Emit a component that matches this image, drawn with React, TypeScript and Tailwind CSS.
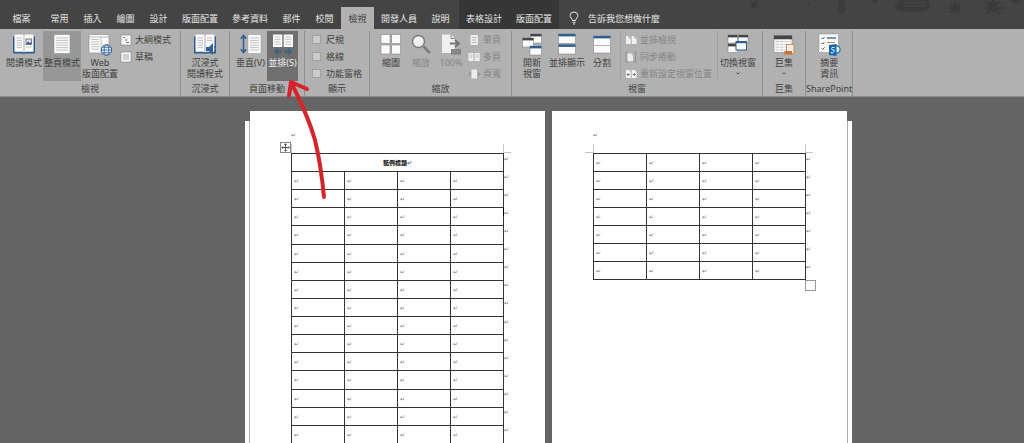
import type { ReactNode } from 'react';
import clsx from 'clsx';

const BLUE = '#2f5f92';
const INK = '#454545';

/* ---------- ribbon icons, all drawn on a 22x20 box ---------- */

function Icon({ children }: { children: ReactNode }) {
  return (
    <svg viewBox="0 0 22 20" className="h-5 w-[22px] shrink-0 overflow-visible" fill="none" aria-hidden="true">
      {children}
    </svg>
  );
}

function Lines({ x, y, w, n, gap = 2.4 }: { x: number; y: number; w: number; n: number; gap?: number }) {
  return (
    <>
      {Array.from({ length: n }, (_, i) => (
        <path key={i} d={`M${x} ${y + i * gap}h${w}`} stroke="#b4b4b4" strokeWidth="0.8" />
      ))}
    </>
  );
}

function Book({ children }: { children?: ReactNode }) {
  return (
    <Icon>
      <path d="M0 2.500h22v17H12.300l-1.300.8-1.300-.8H0z" fill={BLUE} />
      <path d="M1.500 .5h8Q11 .7 11 2v16.500q-.5-.8-2-.8H1.500z" fill="#fafafa" />
      <path d="M20.500 .5h-8Q11 .7 11 2v16.500q.5-.8 2-.8h7.500z" fill="#fafafa" />
      <path d="M11 1.500v17" stroke="#9a9a9a" strokeWidth=".8" />
      <Lines x={3.5} y={4} w={5.5} n={5} />
      {children}
    </Icon>
  );
}

const ReadIcon = () => (
  <Book>
    <rect x="13" y="5" width="5.500" height="5.500" fill="#dfe7ee" stroke={INK} strokeWidth=".7" />
    <path d="M13.200 10.300l2-3 1.500 1.700 1.500-1v2.300z" fill={BLUE} />
    <Lines x={13} y={13} w={5.5} n={1} />
  </Book>
);

const ImmersiveIcon = () => (
  <Book>
    <Lines x={13} y={4} w={5.5} n={2} />
    <path d="M12 13h3l4-4v12l-4-4h-3z" fill={BLUE} />
    <path d="M20.500 12q2 3 0 6" stroke={BLUE} strokeWidth="1.300" />
  </Book>
);

const PrintIcon = () => (
  <Icon>
    <rect x="3" y=".5" width="16" height="19" fill="#fafafa" stroke="#8a8a8a" strokeWidth=".5" />
    <Lines x={5} y={4} w={12} n={6} />
  </Icon>
);

const WebIcon = () => (
  <Icon>
    <path d="M0 .5h20v18.500H0z" fill="#fafafa" stroke="#8a8a8a" strokeWidth=".6" />
    <path d="M0 3h20M12 3v15" stroke="#a0a0a0" strokeWidth=".7" />
    <Lines x={2} y={5.5} w={8} n={5} />
    <circle cx="17.500" cy="16" r="5.200" fill="#e7edf3" stroke={BLUE} />
    <ellipse cx="17.500" cy="16" rx="2.300" ry="5.200" stroke={BLUE} strokeWidth=".8" />
    <path d="M12.300 16h10.400M13.200 13.300h8.600M13.200 18.700h8.600" stroke={BLUE} strokeWidth=".8" />
  </Icon>
);

const VerticalIcon = () => (
  <Icon>
    <path d="M3.500 2v16M.8 4.800L3.500 1.500l2.700 3.300M.8 15.200l2.700 3.300 2.700-3.300" stroke={BLUE} strokeWidth="1.500" />
    <rect x="8" y=".5" width="13" height="19" fill="#fafafa" stroke="#8a8a8a" strokeWidth=".4" />
    <Lines x={10} y={4} w={9} n={6} />
  </Icon>
);

const SideIcon = () => (
  <Icon>
    <rect x="1" y=".5" width="9.300" height="12.500" fill="#fafafa" />
    <rect x="11.700" y=".5" width="9.300" height="12.500" fill="#fafafa" />
    <Lines x={2.5} y={3} w={6} n={4} />
    <Lines x={13.2} y={3} w={6} n={4} />
    <path d="M9.500 17.500H3M6 14.800l-3 2.700 3 2.700M12.500 17.500H19M16 14.800l3 2.700-3 2.700" stroke="#3c5f86" strokeWidth="1.800" />
  </Icon>
);

const ThumbsIcon = () => (
  <Icon>
    {[[1, 0.5], [11.7, 0.5], [1, 11], [11.7, 11]].map(([x, y]) => (
      <rect key={`${x}-${y}`} x={x} y={y} width="9" height="9" fill="#fafafa" stroke="#858585" strokeWidth=".6" />
    ))}
  </Icon>
);

const ZoomIcon = () => (
  <Icon>
    <path d="M13.500 12.500l6.500 6.500" stroke="#7d7d7d" strokeWidth="2.600" />
    <circle cx="8.500" cy="7.500" r="6" fill="#efefef" stroke="#7d7d7d" strokeWidth="1.500" />
  </Icon>
);

const HundredIcon = () => (
  <Icon>
    <path d="M2 .5h9l4 4v14.500H2z" fill="#efefef" />
    <path d="M11 .5v4h4" stroke="#8b8b8b" />
    <path d="M10 9.500h8M15 6l4 3.500-4 3.500" stroke="#757575" strokeWidth="1.800" />
    <rect x="11.500" y="15.500" width="9" height="4.500" fill="#8a8a8a" stroke="#757575" strokeWidth=".8" />
  </Icon>
);

interface WinProps {
  x: number;
  y: number;
  w: number;
  h: number;
  color?: string;
  bar?: number;
}

function Win({ x, y, w, h, color = BLUE, bar = 2.4 }: WinProps) {
  return (
    <>
      <rect x={x} y={y} width={w} height={h} fill="#fafafa" stroke="#777" strokeWidth=".5" />
      <rect x={x} y={y} width={w} height={bar} fill={color} />
    </>
  );
}

const NewWindowIcon = () => (
  <Icon>
    <Win x={9.5} y={0} w={11} h={9} color={INK} />
    <Win x={1.5} y={4} w={11} h={9} color={INK} />
    <Win x={9} y={12} w={11.5} h={9} />
  </Icon>
);

const ArrangeIcon = () => (
  <Icon>
    <Win x={2.5} y={0} w={17} h={9.5} />
    <Win x={2.5} y={10.5} w={17} h={9.5} />
  </Icon>
);

const SplitIcon = () => (
  <Icon>
    <Win x={2.5} y={2} w={17} h={17} />
    <path d="M2.500 11.500h17" stroke="#b5b5b5" />
  </Icon>
);

const SwitchIcon = () => (
  <Icon>
    <Win x={1} y={1} w={9.5} h={8} color={INK} />
    <Win x={11.5} y={1} w={9.5} h={8} color={INK} />
    <Win x={1} y={10} w={9.5} h={8.500} color={INK} />
    <rect x="9" y="7.500" width="10.500" height="8.500" fill="#fafafa" stroke={BLUE} />
    <path d="M9 8.200h10.500" stroke={BLUE} strokeWidth="2" />
  </Icon>
);

const MacroIcon = () => (
  <Icon>
    <Win x={1} y={1.5} w={18} h={17} color={INK} bar={3.8} />
    <Lines x={2.5} y={7.5} w={15} n={4} gap={2.8} />
    <path d="M6.500 5.500v12.500M11 5.500v12.500M15 5.500v12.500" stroke="#fafafa" />
    <path d="M13.500 10.500h7.500v9h-7.500z" fill="#f4ece6" stroke="#c58a5c" strokeWidth=".9" />
    <path d="M11.500 17h7.500v3.500h-7.500z" fill="#c87432" />
  </Icon>
);

const SummaryIcon = () => (
  <Icon>
    <rect x="1" y="0" width="19.500" height="18.500" fill="#fafafa" stroke="#8a8a8a" strokeWidth=".5" />
    <path d="M3.500 4l1 1 2-2M3.500 9l1 1 2-2M3.500 14.500l1 1 2-2" stroke={INK} />
    <path d="M9 4h9" stroke={BLUE} strokeWidth="1.300" />
    <path d="M9 8.500h8" stroke="#c98d50" strokeWidth="1.100" />
    <circle cx="18.500" cy="15.500" r="3.600" fill="#eaf2f9" stroke="#1873bd" strokeWidth="1.300" />
    <path d="M11 11l7.500-1v12L11 21z" fill="#1269b0" />
    <path d="M16.500 13.500q-3.500-.5-3 1.200t2.300 1.300-.3 2.200-2.500-.3" stroke="#fff" strokeWidth=".9" />
  </Icon>
);

/* ---------- 10x10 icons of the small rows ---------- */

function SmallIcon({ children }: { children: ReactNode }) {
  return (
    <svg viewBox="0 0 10 10" className="size-[10px] shrink-0 overflow-visible" fill="none" aria-hidden="true">
      {children}
    </svg>
  );
}

const OutlineIcon = () => (
  <SmallIcon>
    <rect width="10" height="10" fill="#f5f5f5" stroke="#777" strokeWidth=".5" />
    <path d="M2 2.500h2M4 5h2.500M5 7.500h3" stroke="#777" />
  </SmallIcon>
);

const DraftIcon = () => (
  <SmallIcon>
    <rect width="10" height="10" fill="#f5f5f5" stroke="#777" strokeWidth=".5" />
    <path d="M2 3h6M2 5h6M2 7h6" stroke="#999" strokeWidth=".8" />
  </SmallIcon>
);

const OnePageIcon = () => (
  <SmallIcon>
    <rect x="1.500" width="7.500" height="10" fill="#ededed" />
    <path d="M3 2.500h4.500M3 5h4.500M3 7.500h4.500" stroke="#aaa" strokeWidth=".8" />
  </SmallIcon>
);

const MultiPageIcon = () => (
  <SmallIcon>
    <path d="M-.5 1H4.500v8h-5zM5.700 1h5v8h-5z" fill="#ededed" />
    <path d="M.7 3h2.500M.7 5h2.500M7 3h2.500M7 5h2.500" stroke="#aaa" strokeWidth=".7" />
  </SmallIcon>
);

const PageWidthIcon = () => (
  <SmallIcon>
    <rect x="2.500" y=".5" width="5.500" height="9" fill="#ededed" />
    <path d="M1.500 3.500L0 5l1.500 1.500M9 3.500L10.500 5 9 6.500" stroke="#777" />
  </SmallIcon>
);

const ViewSideIcon = () => (
  <SmallIcon>
    <path d="M0 1h3l1.700 2v6H0zM5.700 1h3l1.800 2v6H5.700z" fill="#f1f1f1" />
    <path d="M3 1v2h1.700M8.700 1v2h1.800" stroke="#888" strokeWidth=".7" />
  </SmallIcon>
);

const SyncIcon = () => (
  <SmallIcon>
    <path d="M0 0h2M0 10h2M0 0v10M8 0h2.500M9.500 0v10M8 10h2.500" stroke="#888" strokeWidth=".8" />
    <path d="M1.500 1.500H5l2 2v5.500H1.500z" fill="#ededed" />
  </SmallIcon>
);

const ResetIcon = () => (
  <SmallIcon>
    <path d="M0 1h3l1.700 2v6H0zM5.700 1h3l1.800 2v6H5.700z" fill="#f1f1f1" />
    <path d="M1 5.500h3M6.500 5.500h3M2.500 4L1 5.500 2.500 7M8 4l1.500 1.500L8 7" stroke="#777" strokeWidth=".9" />
  </SmallIcon>
);

/* ---------- ribbon parts ---------- */

interface BigButtonProps {
  icon: ReactNode;
  lines: string[];
  className?: string;
  disabled?: boolean;
  menu?: boolean;
}

function BigButton({ icon, lines, className = 'w-[30px]', disabled, menu }: BigButtonProps) {
  return (
    <button
      type="button"
      disabled={disabled}
      className={clsx(
        'flex h-[50px] shrink-0 flex-col items-center pt-[3px] whitespace-nowrap disabled:text-[#858585]',
        className,
      )}
    >
      {icon}
      <span className="mt-[3px] flex flex-col items-center">
        {lines.map((l) => (
          <span key={l}>{l}</span>
        ))}
        {menu && (
          <svg viewBox="0 0 6 11" className="h-[11px] w-[6px]" fill="none" aria-hidden="true">
            <path d="M1.500 4.500L3 6l1.500-1.500" stroke="#444" strokeWidth=".9" />
          </svg>
        )}
      </span>
    </button>
  );
}

function SmallButton({ icon, label, disabled }: { icon: ReactNode; label: string; disabled?: boolean }) {
  return (
    <button
      type="button"
      disabled={disabled}
      className="flex h-[17px] items-center gap-1 whitespace-nowrap disabled:text-[#858585]"
    >
      {icon}
      {label}
    </button>
  );
}

function CheckRow({ label }: { label: string }) {
  return (
    <label className="flex h-[17px] items-center gap-[5px] whitespace-nowrap">
      <input
        type="checkbox"
        className="size-[9px] appearance-none border border-[#a0a0a0] bg-[#cbcbcb] checked:bg-[#2f5f92]"
      />
      {label}
    </label>
  );
}

function Group({ label, className, children }: { label: string; className?: string; children: ReactNode }) {
  return (
    <section aria-label={label} className="flex shrink-0 flex-col border-r border-[#8f8f8f]">
      <div className={clsx('flex h-[51px]', className)}>{children}</div>
      <div className="text-center leading-[14px]">{label}</div>
    </section>
  );
}

const Divider = () => <div className="h-[48px] w-px shrink-0 bg-[#9f9f9f]" />;

const tabs = ['常用', '插入', '繪圖', '設計', '版面配置', '參考資料', '郵件', '校閱', '檢視', '開發人員', '說明'];

function Tab({ label, active }: { label: string; active?: boolean }) {
  return (
    <button
      type="button"
      role="tab"
      aria-selected={!!active}
      className={clsx(
        'h-[22px] shrink-0 whitespace-nowrap',
        label.length > 2 ? 'w-[50px]' : 'w-[33px]',
        active && 'bg-[#b1b1b1] text-[#444]',
      )}
    >
      {label}
    </button>
  );
}

function TitleBar() {
  return (
    <header className="relative flex h-[29px] items-end bg-[#444] text-[#e6e6e6]">
      <svg viewBox="0 0 280 20" className="absolute top-0 right-0 h-5 w-[280px]" fill="#3b3b3b" aria-hidden="true">
        <path d="M5 1l4 2 4-3v4l4 3-5-1-4 4V5z" />
        <circle cx="65" cy="5" r="1.500" />
        <path d="M94 0h6l1 6 2 4-6 3-5-3 3-4z" />
        <path d="M126 0h8l-3 4z" />
        <path d="M155 0q-8 7 0 11l4 1 2-2 2 2h5l2-2 2 2q12 0 13-4l4 1-4-4V0z" />
        <path d="M160 2h22v1.500h-22zM160 5h22v1.500h-22z" fill="#444" />
        <g stroke="#3b3b3b" strokeWidth="2">
          <path d="M204 8h14M211 2v11M206 4l10 9M216 4l-10 9M238 8h22M249 0v13M242 2l14 12M256 2l-14 12" />
        </g>
        <circle cx="249" cy="6" r="5" />
        <path d="M266 0l5 4 7-2-4-2z" />
      </svg>
      <div role="tablist" className="flex items-end">
        <button type="button" role="tab" aria-selected={false} className="h-[22px] w-[43px]">
          檔案
        </button>
        {tabs.map((t) => (
          <Tab key={t} label={t} active={t === '檢視'} />
        ))}
        <div className="ml-[2px] flex h-[29px] items-end bg-[#363636]">
          <Tab label="表格設計" />
          <Tab label="版面配置" />
        </div>
      </div>
      <button type="button" className="ml-[10px] flex h-[22px] items-center gap-[9px] whitespace-nowrap">
        <svg viewBox="0 0 10 14" className="h-[14px] w-[10px]" fill="none" stroke="#e6e6e6" aria-hidden="true">
          <path d="M3.300 9.500Q3.300 8 2.200 7 1 5.800 1 4.500 1.300 1 5 1t4 3.500q0 1.300-1.200 2.500-1.100 1-1.100 2.500zM3.500 11.300h3M4 13h2" />
        </svg>
        告訴我您想做什麼
      </button>
    </header>
  );
}

function Ribbon() {
  return (
    <div className="flex border-b border-[#8a8a8a] bg-[#b1b1b1] pt-[2px] text-[#3f3f3f]">
      <Group label="檢視" className="pr-[9px] pl-[5px]">
        <BigButton icon={<ReadIcon />} lines={['閱讀模式']} className="w-[38px]" />
        <BigButton icon={<PrintIcon />} lines={['整頁模式']} className="w-[38px] bg-[#979797]" />
        <BigButton icon={<WebIcon />} lines={['Web', '版面配置']} className="w-[38px]" />
        <div className="ml-[2px]">
          <SmallButton icon={<OutlineIcon />} label="大綱模式" />
          <SmallButton icon={<DraftIcon />} label="草稿" />
        </div>
      </Group>
      <Group label="沉浸式" className="px-[3px]">
        <BigButton icon={<ImmersiveIcon />} lines={['沉浸式', '閱讀程式']} className="w-[42px]" />
      </Group>
      <Group label="頁面移動" className="pr-[6px] pl-[4px]">
        <BigButton icon={<VerticalIcon />} lines={['垂直(V)']} className="w-[33px]" />
        <BigButton icon={<SideIcon />} lines={['並排(S)']} className="w-[31px] bg-[#6f6f6f] text-[#f0f0f0]" />
      </Group>
      <Group label="顯示" className="px-[7px]">
        <div>
          <CheckRow label="尺規" />
          <CheckRow label="格線" />
          <CheckRow label="功能窗格" />
        </div>
      </Group>
      <Group label="縮放" className="pr-[10px] pl-[6px]">
        <BigButton icon={<ThumbsIcon />} lines={['縮圖']} />
        <BigButton icon={<ZoomIcon />} lines={['縮放']} disabled />
        <BigButton icon={<HundredIcon />} lines={['100%']} disabled />
        <div className="ml-[3px]">
          <SmallButton icon={<OnePageIcon />} label="單頁" disabled />
          <SmallButton icon={<MultiPageIcon />} label="多頁" disabled />
          <SmallButton icon={<PageWidthIcon />} label="頁寬" disabled />
        </div>
      </Group>
      <Group label="視窗" className="pr-[4px] pl-[5px]">
        <BigButton icon={<NewWindowIcon />} lines={['開新', '視窗']} />
        <BigButton icon={<ArrangeIcon />} lines={['並排顯示']} className="w-[40px]" />
        <BigButton icon={<SplitIcon />} lines={['分割']} />
        <div className="flex pl-[3px]">
          <Divider />
          <div className="px-[5px]">
            <SmallButton icon={<ViewSideIcon />} label="並排檢視" disabled />
            <SmallButton icon={<SyncIcon />} label="同步捲動" disabled />
            <SmallButton icon={<ResetIcon />} label="重新設定視窗位置" disabled />
          </div>
          <Divider />
        </div>
        <BigButton icon={<SwitchIcon />} lines={['切換視窗']} className="w-[40px]" menu />
      </Group>
      <Group label="巨集" className="px-[6px]">
        <BigButton icon={<MacroIcon />} lines={['巨集']} menu />
      </Group>
      <Group label="SharePoint" className="justify-center">
        <BigButton icon={<SummaryIcon />} lines={['摘要', '資訊']} className="w-[46px]" />
      </Group>
    </div>
  );
}

/* ---------- document ---------- */

const Mark = () => <span className="text-[6px] leading-[8px] text-[#777]">↵</span>;

function DocTable({ rows, title, className }: { rows: number; title?: string; className?: string }) {
  return (
    <table className={clsx('w-[220px] table-fixed border-collapse', className)}>
      <colgroup>
        <col className="w-[53px]" />
        <col className="w-[53px]" />
        <col className="w-[53px]" />
        <col className="w-[53px]" />
        <col />
      </colgroup>
      <tbody>
        {title && (
          <tr className="h-[18px]">
            <th colSpan={4} className="border border-[#333] p-0 text-center text-[6px] leading-[8px] font-bold text-black">
              {title}
              <Mark />
            </th>
            <td className="p-0 align-top leading-[8px]">
              <Mark />
            </td>
          </tr>
        )}
        {Array.from({ length: rows }, (_, r) => (
          <tr key={r}>
            {[0, 1, 2, 3].map((c) => (
              <td key={c} className="border border-[#333] py-0 pr-0 pl-[2px] leading-[8px]">
                <Mark />
              </td>
            ))}
            <td className="p-0 align-top leading-[8px]">
              <Mark />
            </td>
          </tr>
        ))}
      </tbody>
    </table>
  );
}

function Page({ children }: { children: ReactNode }) {
  return (
    <div className="h-[417px] w-[295px] shrink-0 bg-white pt-[20px] pl-[41px]">
      <div className="flex h-[22px] leading-[8px]">
        <Mark />
      </div>
      <div className="relative w-[220px]">
        {/* crop marks of the text area */}
        <div className="absolute -top-[9px] left-0 h-[9px] w-px bg-[#c4c4c4]" />
        <div className="absolute -top-[9px] left-[212px] h-[9px] w-px bg-[#c4c4c4]" />
        <div className="absolute -top-px -left-[8px] h-px w-[8px] bg-[#c4c4c4]" />
        <div className="absolute -top-px left-[212px] h-px w-[8px] bg-[#c4c4c4]" />
        {children}
      </div>
    </div>
  );
}

export default function App() {
  return (
    <div className="relative flex h-screen flex-col overflow-hidden bg-[#656565] font-['Noto_Sans','Noto_Sans_CJK_TC',sans-serif] text-[9px] leading-[11px]">
      <TitleBar />
      <Ribbon />
      <main className="flex min-h-0 flex-1 items-start justify-center overflow-hidden pt-[14px] pl-[73px]">
        <div className="mt-[10px] h-[417px] w-[5px] shrink-0 border-r border-[#aaa] bg-white" />
        <Page>
          <button
            type="button"
            aria-label="移動表格"
            className="absolute -top-[11px] -left-[11px] size-[11px] border border-[#888] bg-white"
          >
            <svg viewBox="0 0 9 9" className="size-[9px]" fill="none" stroke="#333" strokeWidth=".8" aria-hidden="true">
              <path d="M4.500 .8v7.400M.8 4.500h7.400M3.300 2l1.200-1.200L5.700 2M3.300 7l1.200 1.200L5.700 7M2 3.300L.8 4.500 2 5.700M7 3.300l1.200 1.200L7 5.700" />
            </svg>
          </button>
          <DocTable rows={15} title="範例標題" className="h-[291px]" />
          <div className="absolute top-[55px] left-[212px] h-[8px] w-px bg-black" />
        </Page>
        <div className="ml-[7px]">
          <Page>
            <DocTable rows={7} className="h-[127px]" />
            <div className="absolute top-full left-[212px] size-[11px] border border-[#999] bg-white" />
          </Page>
        </div>
        <div className="mt-[10px] h-[417px] w-[5px] shrink-0 border-l border-[#aaa] bg-white" />
      </main>
      <svg
        viewBox="0 0 50 130"
        className="pointer-events-none absolute top-[75px] left-[282px] h-[130px] w-[50px]"
        fill="none"
        stroke="#d3252b"
        strokeWidth="4"
        strokeLinecap="round"
        strokeLinejoin="round"
        aria-hidden="true"
      >
        <path d="M42 122Q39 90 33 65 26 41 10 9" />
        <path d="M7 21L9 7l16 7" />
      </svg>
    </div>
  );
}
